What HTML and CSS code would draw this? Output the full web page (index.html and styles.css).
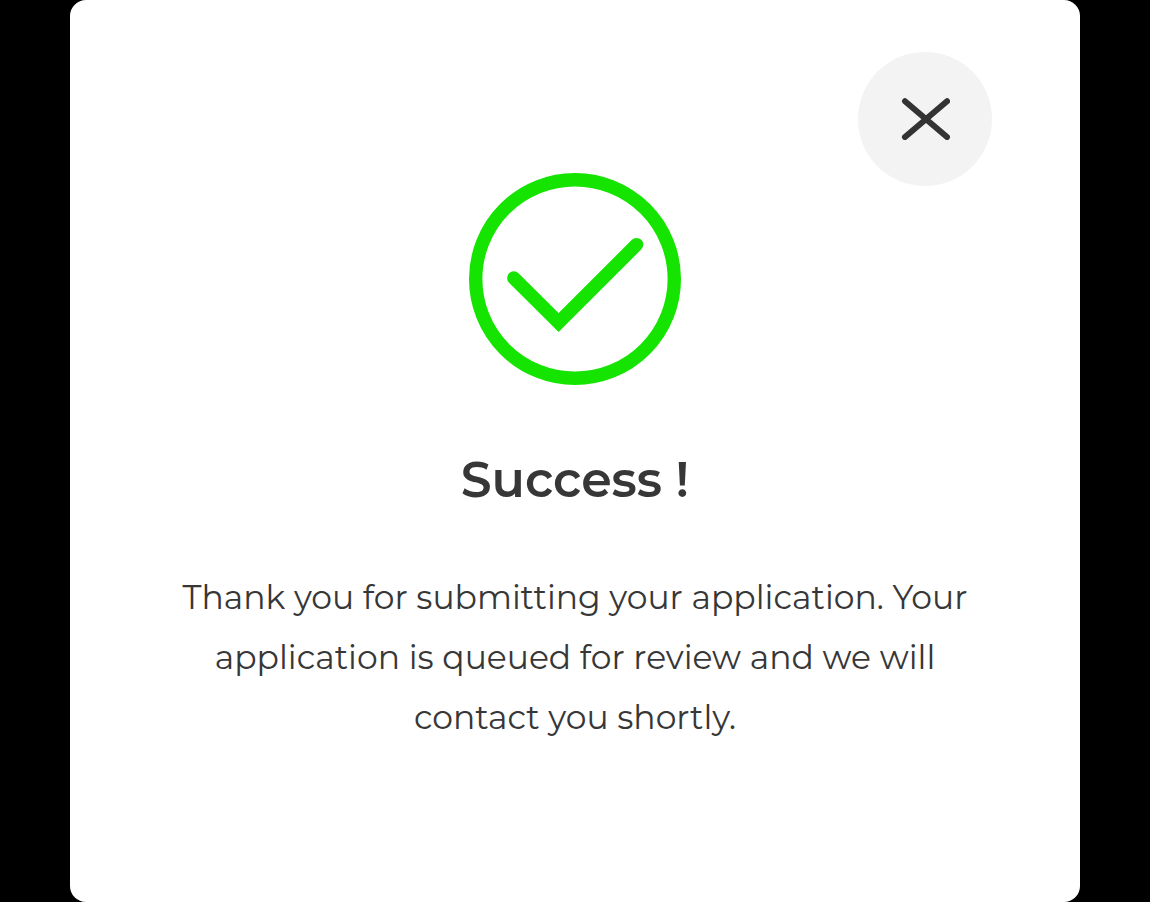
FILE: index.html
```html
<!DOCTYPE html>
<html lang="en">
<head>
<meta charset="utf-8">
<meta name="viewport" content="width=device-width, initial-scale=1">
<title>Success</title>
<link rel="stylesheet" href="styles.css">
</head>
<body class="backdrop">
<main class="dialog" role="dialog" aria-labelledby="dialog-title" aria-describedby="dialog-text">
<button class="close" type="button" aria-label="Close">
<svg class="close-icon" viewBox="0 0 50 42" aria-hidden="true"><path d="M5 3.2 47 39M47 3.2 5 39"/></svg>
</button>
<svg class="check-icon" viewBox="0 0 212 212" aria-hidden="true"><circle cx="106" cy="106" r="99.3"/><path d="M44.8 104.9 89.6 149.5 167.6 71.6"/></svg>
<h1 class="title" id="dialog-title">Success !</h1>
<p class="message" id="dialog-text">Thank you for submitting your application. Your application is queued for review and we will contact you shortly.</p>
</main>
</body>
</html>
```

FILE: styles.css
```css
* {
  box-sizing: border-box;
}

.backdrop {
  display: flex;
  min-height: 100vh;
  margin: 0;
  padding: 0 70px;
  background: #000;
  color: #373737;
  font-family: Montserrat, Inter, sans-serif;
}

.dialog {
  position: relative;
  display: flex;
  flex: 1;
  flex-direction: column;
  align-items: center;
  padding: 173px 88px 80px;
  border-radius: 16px;
  background: #fff;
}

.close {
  position: absolute;
  top: 52px;
  right: 88px;
  display: grid;
  place-items: center;
  width: 134px;
  height: 134px;
  padding: 0;
  border: 0;
  border-radius: 50%;
  background: #f3f3f3;
  cursor: pointer;
}

.close-icon {
  width: 50px;
  height: 42px;
  fill: none;
  stroke: #333;
  stroke-width: 6;
  stroke-linecap: round;
}

.check-icon {
  width: 212px;
  height: 212px;
  fill: none;
  stroke: #14e400;
  stroke-width: 13.4;
  stroke-linecap: round;
}

.title {
  margin: 65px 0 57px;
  font-size: 49px;
  font-weight: 600;
  line-height: 60px;
}

.message {
  max-width: 800px;
  margin: 0;
  font-size: 33px;
  font-weight: 400;
  line-height: 60px;
  text-align: center;
}
```
